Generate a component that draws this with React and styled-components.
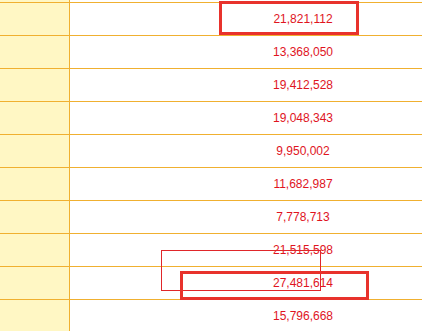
import React from "react";
import styled, { createGlobalStyle } from "styled-components";

const Global = createGlobalStyle`
  html, body { margin: 0; padding: 0; background: #ffffff; overflow: hidden; }
  body { font-family: "Liberation Sans", Arial, sans-serif; }
`;

const Viewport = styled.div`
  position: relative;
  width: 422px;
  height: 331px;
  overflow: hidden;
  background: #ffffff;
`;

const Sheet = styled.div`
  display: grid;
  grid-template-columns: 70px 466px;
  grid-auto-rows: auto;
`;

const HeadCell = styled.div`
  height: ${(p) => p.$h}px;
  background: #fff7c4;
  border-right: 1px solid #f0b030;
  border-bottom: 1px solid #f0b030;
`;

const ValueCell = styled.div`
  height: ${(p) => p.$h}px;
  display: flex;
  align-items: center;
  justify-content: center;
  border-bottom: 1px solid #f0b030;
  color: #e0141e;
  font-size: 12px;
  line-height: 1;
`;

const Mark = styled.div`
  position: absolute;
  box-sizing: border-box;
  border: ${(p) => p.$w}px solid ${(p) => p.$c};
  left: ${(p) => p.$x}px;
  top: ${(p) => p.$y}px;
  width: ${(p) => p.$width}px;
  height: ${(p) => p.$height}px;
  pointer-events: none;
`;

const values = [
  "21,821,112",
  "13,368,050",
  "19,412,528",
  "19,048,343",
  "9,950,002",
  "11,682,987",
  "7,778,713",
  "21,515,598",
  "27,481,614",
  "15,796,668",
];

export default function App() {
  return (
    <Viewport>
      <Global />
      <Sheet>
        <HeadCell $h={2} />
        <ValueCell $h={2} />
        {values.map((v) => (
          <React.Fragment key={v}>
            <HeadCell $h={32} />
            <ValueCell $h={32}>{v}</ValueCell>
          </React.Fragment>
        ))}
      </Sheet>
      <Mark $w={3} $c="#e8322c" $x={219} $y={1} $width={140} $height={34} />
      <Mark $w={1} $c="#e0262a" $x={161} $y={250} $width={160} $height={41} />
      <Mark $w={3} $c="#e8322c" $x={180} $y={271} $width={189} $height={29} />
    </Viewport>
  );
}
